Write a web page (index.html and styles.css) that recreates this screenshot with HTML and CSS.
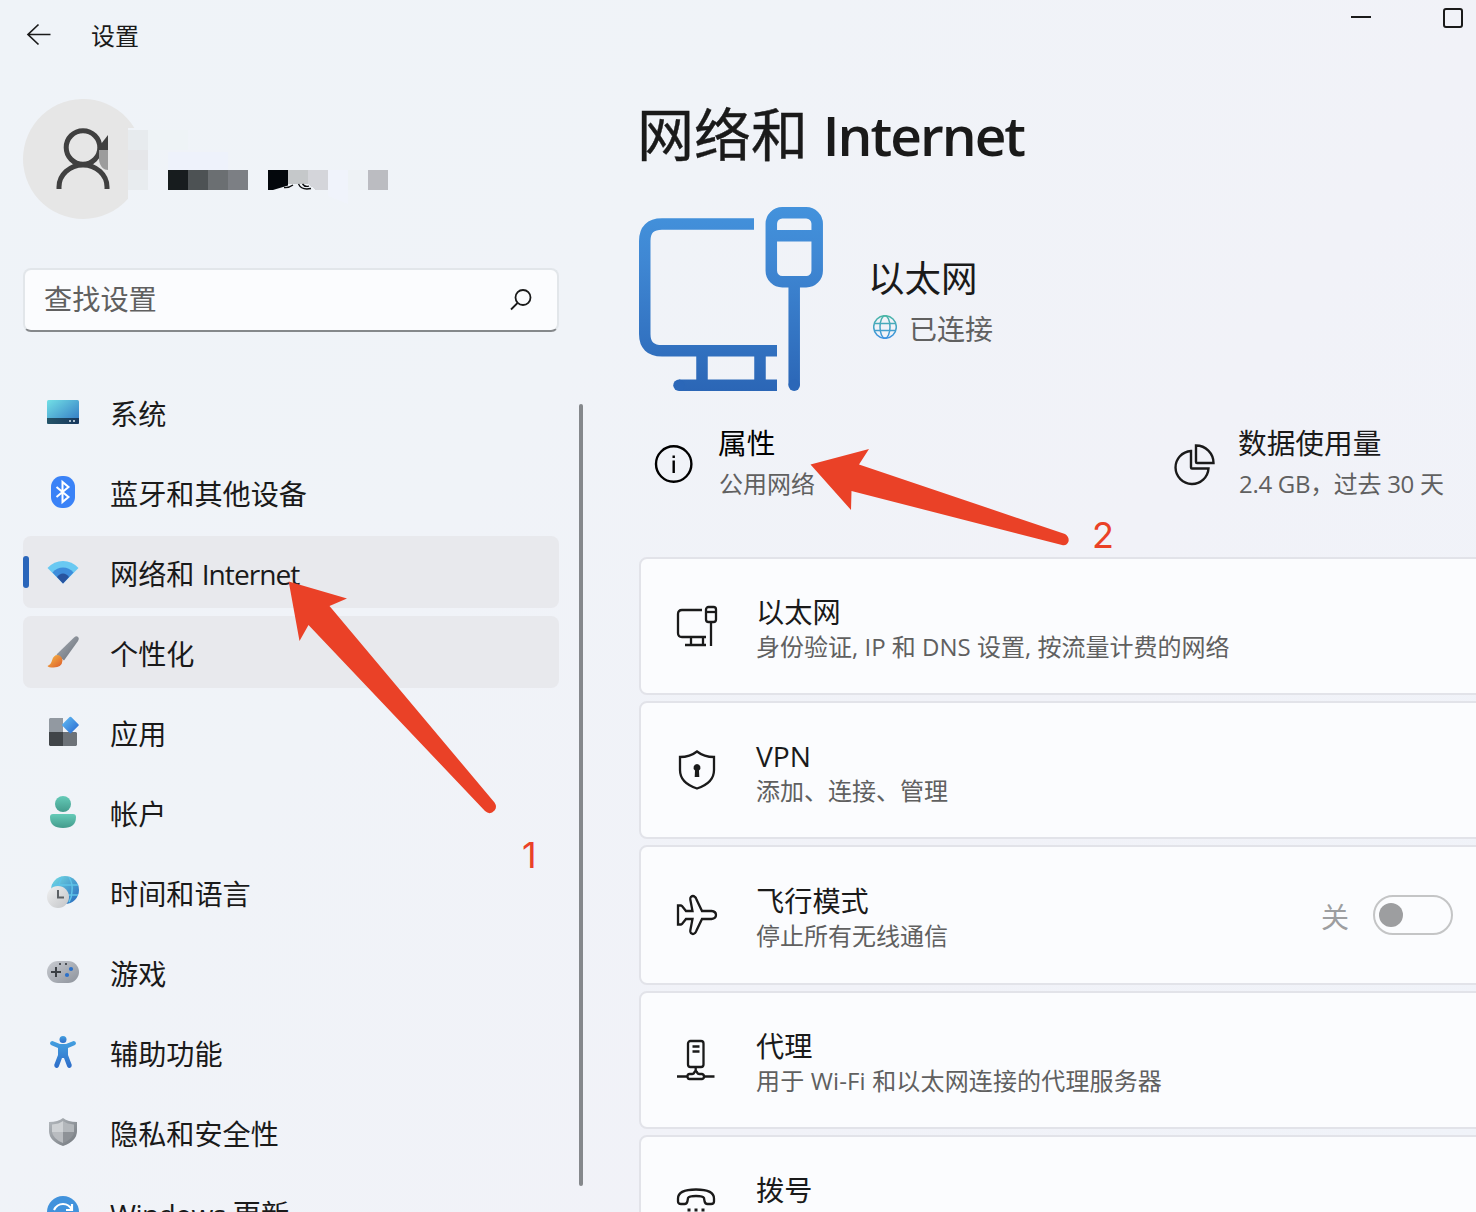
FILE: index.html
```html
<!DOCTYPE html>
<html lang="zh-CN">
<head>
<meta charset="utf-8">
<title>设置</title>
<link rel="stylesheet" href="styles.css">
</head>
<body>
<div class="window">
  <header class="titlebar">
    <svg class="back" width="26" height="24" viewBox="0 0 26 24"><path d="M24.500 11.500H2M12.500 1.500L2 11.500l10.500 10" /></svg>
    <span class="app-title">设置</span>
    <div class="controls">
      <svg width="20" height="20" viewBox="0 0 20 20"><path d="M0 9h20"/></svg>
      <svg width="20" height="20" viewBox="0 0 20 20"><rect x="1" y="1" width="18" height="18" rx="2"/></svg>
    </div>
  </header>
  <div class="body">
    <aside class="sidebar">
      <svg class="profile" width="368" height="120" viewBox="23 99 368 120">
        <path fill="#e6e6e6" d="M128 198.700A60 60 0 1 1 134.400 128H128Z"/>
        <g fill="none" stroke="#404040" stroke-width="5"><circle cx="83" cy="147.500" r="16.800"/><path d="M59 189v-2a24 22 0 0 1 48 0v2"/></g>
        <path fill="#404040" d="M101 144l7-9v15h-7z"/><path fill="#9c9c9c" d="M99 150h9v20c-4 0-8-3-9-10z"/>
        <g shape-rendering="crispEdges">
          <path fill="#e7ebee" d="M128 130h20v20h-20z"/><path fill="#e5e6e9" d="M128 150h20v20h-20z"/><path fill="#e8ecef" d="M128 170h20v20h-20z"/>
          <path fill="#eef3f6" d="M148 130h40v20h-40z"/><path fill="#eef2fb" d="M168 152h60v18h-60z"/>
          <path fill="#171c1e" d="M168 170h20v20h-20z"/><path fill="#4d5254" d="M188 170h20v20h-20z"/><path fill="#6b6f72" d="M208 170h20v20h-20z"/><path fill="#7c7f84" d="M228 170h20v20h-20z"/>
          <path fill="#c5c8ca" d="M288 170h20v14h-20z"/><path fill="#d4d5da" d="M308 170h20v20h-12l-8-6z"/><path fill="#f0f3fb" d="M328 170h20v34l-20-8z"/><path fill="#eef2f5" d="M348 170h20v20h-20z"/><path fill="#bbbcc1" d="M368 170h20v20h-20z"/>
        </g>
        <path fill="#03070c" d="M268 170h20v15.500l-15 4.500h-5z"/>
        <path fill="none" stroke="#0a0c0e" stroke-width="1.300" d="M284 187.500q5 .5 9-2.500M298.500 184q3 6.500 12.500 4.500M302.500 184q2.500 3.500 6.500 2"/>
      </svg>
      <div class="search">
        <span>查找设置</span>
        <svg width="24" height="24" viewBox="0 0 24 24"><circle cx="14" cy="9.500" r="7.500"/><path d="M8.500 15L2 21.500"/></svg>
      </div>
      <nav class="nav">
        <a class="item"><svg viewBox="0 0 32 32"><defs><linearGradient id="sys" x1="0" y1="0" x2="1" y2="1"><stop stop-color="#72e0e6"/><stop offset="1" stop-color="#2f73c2"/></linearGradient><linearGradient id="sysb"><stop stop-color="#255468"/><stop offset="1" stop-color="#17375c"/></linearGradient></defs><rect y="4" width="32" height="24" rx="1.500" fill="url(#sys)"/><path d="M0 22h32v4.500q0 1.500-1.500 1.500h-29Q0 28 0 26.500z" fill="url(#sysb)"/><path d="M22 24h2v2h-2zM26 24h2v2h-2z" fill="#a9bccb"/></svg><span>系统</span></a>
        <a class="item"><svg viewBox="0 0 32 32"><rect x="4" width="24" height="32" rx="11" fill="#3a82f7"/><path d="M9.500 11l12 10-6 5V6l6 5-12 10" fill="none" stroke="#fff" stroke-width="2"/></svg><span>蓝牙和其他设备</span></a>
        <a class="item active"><svg viewBox="0 0 32 32"><path d="M.5 12Q7 5 16 5t15.500 7L16 27.500z" fill="#69c9f2"/><path d="M5.500 16.500Q10 11.500 16 11.500t10.500 5L16 27.500z" fill="#3e8ddb"/><path d="M10 21q2.500-3.500 6-3.500t6 3.500l-6 6.500z" fill="#28549f"/></svg><span>网络和 <span class="latin">Internet</span></span></a>
        <a class="item hover"><svg viewBox="0 0 32 32"><defs><linearGradient id="br" x1="0" y1="0" x2="1" y2="1"><stop stop-color="#aab0b8"/><stop offset="1" stop-color="#666c75"/></linearGradient><linearGradient id="bo" x1="0" y1="0" x2="1" y2="1"><stop stop-color="#f8bd48"/><stop offset="1" stop-color="#db5a2a"/></linearGradient></defs><path d="M9.500 18.500L27 1.500q2.500-2 4-.5t0 4L17 24.500z" fill="url(#br)"/><path d="M.5 30q3.500-1.500 4.500-5.500Q6.500 19 10.500 19q4.500.5 5 5.500-.5 7-9 7-5 0-6-1.500z" fill="url(#bo)"/></svg><span>个性化</span></a>
        <a class="item"><svg viewBox="0 0 32 32"><defs><linearGradient id="ap" x1="0" y1="0" x2="1" y2="1"><stop stop-color="#62bff5"/><stop offset="1" stop-color="#2866cf"/></linearGradient></defs><path d="M3 2h13v14H2V3z" fill="#9299a1"/><path d="M2 16h14v14H3l-1-1z" fill="#414549"/><path d="M16 16h13l1 1v12l-1 1H16z" fill="#6d7278"/><path d="M22.600 1.100q.8-.8 1.600 0l7.200 7.100q.8.800 0 1.600l-7.200 7.300q-.8.800-1.600 0l-7.200-7.300q-.8-.8 0-1.600z" fill="url(#ap)"/></svg><span>应用</span></a>
        <a class="item"><svg viewBox="0 0 32 32"><defs><linearGradient id="ac" x1="0" y1="0" x2="0" y2="1"><stop stop-color="#65cbb8"/><stop offset="1" stop-color="#439b8c"/></linearGradient></defs><circle cx="16" cy="8" r="8" fill="url(#ac)"/><path d="M6 18h20q3 0 3 3 0 11-13 11T3 21q0-3 3-3z" fill="url(#ac)"/></svg><span>帐户</span></a>
        <a class="item"><svg viewBox="0 0 32 32"><defs><linearGradient id="tm" x1="0" y1="0" x2="1" y2="1"><stop offset=".1" stop-color="#6ed3e0"/><stop offset="1" stop-color="#2466bd"/></linearGradient><linearGradient id="ck" x1="0" y1="0" x2="1" y2="1"><stop stop-color="#f1f1f2"/><stop offset="1" stop-color="#c2c4c7"/></linearGradient></defs><circle cx="18" cy="14" r="14" fill="url(#tm)"/><path d="M5 9h26M8 19h23M15 1q-3 5-3 9M22 1q4 7 3 14 0 6-3 11" fill="none" stroke="#5fc3e8" stroke-width="1.500"/><circle cx="11" cy="21" r="11" fill="url(#ck)"/><path d="M11 14v7.500h6" fill="none" stroke="#5c6064" stroke-width="2"/></svg><span>时间和语言</span></a>
        <a class="item"><svg viewBox="0 0 32 32"><defs><linearGradient id="gm" x1="0" y1="0" x2="1" y2="1"><stop stop-color="#c9ccd2"/><stop offset="1" stop-color="#8d929b"/></linearGradient></defs><rect y="5" width="32" height="22" rx="11" fill="url(#gm)"/><path d="M4 16h10M9 11v10" stroke="#3b3f44" stroke-width="2"/><path d="M12 7h2v2h-2zM18 7h2v2h-2z" fill="#4a4e54"/><circle cx="24" cy="13" r="2.100" fill="#2b70c9"/><circle cx="20" cy="19" r="2.100" fill="#2b70c9"/></svg><span>游戏</span></a>
        <a class="item"><svg viewBox="0 0 32 32"><defs><linearGradient id="ax" x1="0" y1="0" x2="0" y2="1"><stop stop-color="#44a0e0"/><stop offset="1" stop-color="#2d6cc9"/></linearGradient></defs><circle cx="16" cy="3.500" r="3.500" fill="url(#ax)"/><path d="M5.500 5L13 8h6l7.500-3q2 0 2.500 2 .2 1.500-1.500 2.200L21 12v7l3.800 10q0 2.500-2 3-2 0-2.600-1.600L17 22h-2l-3.200 8.400Q11.200 32 9.200 32q-2-.5-2-3L11 19v-7L4.500 9.200Q2.800 8.500 3 7q.5-2 2.500-2z" fill="url(#ax)"/></svg><span>辅助功能</span></a>
        <a class="item"><svg viewBox="0 0 32 32"><defs><linearGradient id="sh" x1="0" y1="0" x2="1" y2="1"><stop stop-color="#b5babf"/><stop offset="1" stop-color="#72777d"/></linearGradient></defs><path d="M16 2q5 4 14 4v9q0 10-14 15Q2 25 2 15V6q9 0 14-4z" fill="url(#sh)"/><path d="M16 5v11H5V8.500Q12 8 16 5z" fill="#ced1d4"/><path d="M16 5v11h11V8.500Q20 8 16 5z" fill="#b3b7bb"/><path d="M5 16h11v11Q6 23 5 16z" fill="#b9bcc0"/><path d="M27 16H16v11q10-4 11-11z" fill="#8e9297"/></svg><span>隐私和安全性</span></a>
        <a class="item"><svg viewBox="0 0 32 32"><circle cx="16" cy="16" r="16" fill="#4192dc"/><path d="M7 14q3-6 9-6t9 6M25 8v6h-6M25 18q-3 6-9 6t-9-6" fill="none" stroke="#fff" stroke-width="2.200"/></svg><span><span class="latin">Windows</span> 更新</span></a>
      </nav>
    </aside>
    <div class="scrollbar"></div>
    <main class="content">
      <h1>网络和 <span class="latin">Internet</span></h1>
      <section class="hero">
        <svg width="184" height="184" viewBox="0 0 184 184">
          <defs><linearGradient id="eth" gradientUnits="userSpaceOnUse" x1="0" y1="0" x2="0" y2="184"><stop stop-color="#4392dc"/><stop offset=".3" stop-color="#3f87d3"/><stop offset="1" stop-color="#2b66b6"/></linearGradient></defs>
          <g fill="none" stroke="url(#eth)" stroke-width="11.500"><path d="M115 17H23Q5.750 17 5.750 34v93Q5.750 143.700 23 143.700h115M63 144v34M121 144v34"/><path d="M138 178.200H40" /><rect x="132.300" y="5.750" width="45.900" height="69" rx="11"/><path d="M133 28.800h45M155.200 75v103"/></g>
          <circle cx="40" cy="178.200" r="5.750" fill="#2b67b8"/><circle cx="155.200" cy="178.200" r="5.750" fill="#2b67b8"/>
        </svg>
        <div class="hero-text">
          <h2>以太网</h2>
          <p class="status"><svg width="24" height="24" viewBox="0 0 24 24"><defs><linearGradient id="gl" gradientUnits="userSpaceOnUse" x1="0" y1="0" x2="0" y2="24"><stop stop-color="#4cb8a5"/><stop offset="1" stop-color="#3d90e3"/></linearGradient></defs><g fill="none" stroke="url(#gl)" stroke-width="1.500"><circle cx="12" cy="12" r="11.300"/><ellipse cx="12" cy="12" rx="5" ry="11.300"/><path d="M1.500 8.500h21M1.500 15.500h21"/></g></svg><span>已连接</span></p>
        </div>
      </section>
      <section class="facts">
        <div class="fact">
          <svg width="40" height="40" viewBox="0 0 40 40"><circle cx="19.700" cy="20" r="17.700"/><path d="M19.700 16.500v12.500M19.700 11.500v2.500"/></svg>
          <div class="black"><h3>属性</h3><p>公用网络</p></div>
        </div>
        <div class="fact">
          <svg width="40" height="40" viewBox="0 0 40 40"><path d="M17 7A16.500 16.500 0 1 0 34.500 24.500H18Q17 24.500 17 23.500zM22 1.500A17.500 17.500 0 0 1 39.500 19H23Q22 19 22 18z"/></svg>
          <div><h3>数据使用量</h3><p class="usage">2.4 GB，过去 30 天</p></div>
        </div>
      </section>
      <section class="cards">
        <div class="card"><svg viewBox="0 0 40 40"><path d="M25 4H5Q1 4 1 8v19q0 4 4 4h24M14 31v8M26 31v8M8 39h21M34 16v24"/><rect x="29" y="1" width="10" height="15" rx="2.500"/><path d="M29 6h10"/></svg><div><h4>以太网</h4><p>身份验证, IP 和 DNS 设置, 按流量计费的网络</p></div></div>
        <div class="card"><svg viewBox="0 0 40 40"><path d="M20 1.500Q27 7 37 7v13q0 13-17 18.500Q3 33 3 20V7q10 0 17-5.500z"/><path d="M20 14a3.600 3.600 0 0 1 2 6.500l.3 6.500h-4.600l.3-6.500a3.600 3.600 0 0 1 2-6.500z" class="solid"/></svg><div><h4>VPN</h4><p>添加、连接、管理</p></div></div>
        <div class="card tall"><svg viewBox="0 0 40 40"><path d="M14 1.800q2-1.600 4 .2 1 .8 1.500 2.500L25 16h9.500q4.500.5 4.500 4t-4.500 4H25l-5.500 11.500q-.5 1.700-1.500 2.500-2 1.800-4 .2-1-1-.7-2.700L15.500 24H9l-4 5q-.5.500-1.300.500H1V10.500h2.700q.8 0 1.300.5l4 5h6.500L13.300 4.500q-.3-1.700.7-2.700z"/></svg><div><h4>飞行模式</h4><p>停止所有无线通信</p></div><div class="switch"><span>关</span><i class="track"><i class="knob"></i></i></div></div>
        <div class="card"><svg viewBox="0 0 40 40"><rect x="11" y="1" width="15.500" height="26" rx="2.500"/><path d="M15.500 6.500h7M15.500 11.500h7M18.700 27v5M0 36.500h10M27.500 36.500h10"/><path d="M12.500 34h2.500q2 0 2.500-2l1.200-1 1.200 1q.5 2 2.600 2H25q2 .3 2 2.500T25 39H12.500q-2 0-2-2.500t2-2.500z"/></svg><div><h4>代理</h4><p class="wide">用于 Wi-Fi 和以太网连接的代理服务器</p></div></div>
        <div class="card last"><svg viewBox="0 0 40 40"><path d="M1 14.500Q1 5.500 19 5.500t18 9v3Q37 20 34 20h-3.500q-2.500 0-3-3l-.5-3q-1-2-8-2t-8 2l-.5 3q-.5 3-3 3H4q-3 0-3-2.500z"/><path d="M12 24.500v3M19 24.500v3M26 24.500v3" class="dots"/></svg><div><h4>拨号</h4></div></div>
      </section>
    </main>
  </div>
  <svg class="annotations" width="1476" height="1212" viewBox="0 0 1476 1212">
    <path d="M288.700 581.500L347 598.500 329.500 606 494.500 802.500Q497.500 807 494.500 810.500 490 815.500 485 811L308.500 625 299.500 641z"/>
    <path d="M810.500 464.500L869 449 859 464.500 1065 534Q1069.500 537 1068.500 541.500 1067 546 1062 545L851.500 491 851 510z"/>
    <text x="522" y="868">1</text>
    <text x="1092" y="548">2</text>
  </svg>
</div>
</body>
</html>
```

FILE: styles.css
```css
* { box-sizing: border-box; margin: 0; padding: 0; }

body {
  font-family: "Open Sans", "Noto Sans CJK SC", sans-serif;
  color: #1a1a1a;
  overflow: hidden;
}

h1, h2, h3, h4 { font-weight: 400; }

.window {
  position: relative;
  width: 1476px;
  height: 1212px;
  overflow: hidden;
  background: linear-gradient(125deg, #eff3f8 0%, #f0f3f8 35%, #f1f2f8 65%, #f0f3f9 100%);
}

.titlebar {
  display: flex;
  align-items: center;
  height: 69px;
  padding-left: 26px;
}
.titlebar svg { fill: none; stroke: #1a1a1a; stroke-width: 2; }
.titlebar .back { stroke-width: 1.7; }
.app-title { margin-left: 39px; padding-top: 2px; font-size: 24px; line-height: 32px; }
.controls {
  display: flex;
  gap: 72px;
  margin-left: auto;
  align-self: flex-start;
  padding: 8px 13px 0 0;
}

.body { display: flex; padding-left: 23px; }
.sidebar { width: 536px; padding-top: 30px; flex: none; }
.profile { display: block; }
.search {
  display: flex;
  align-items: center;
  justify-content: space-between;
  height: 64px;
  margin-top: 49px;
  padding: 0 24px 0 19px;
  border: 2px solid #e2e6ea;
  border-bottom-color: #85888b;
  border-radius: 8px;
  background: #fbfcfe;
  color: #606060;
  font-size: 28.2px;
  line-height: 38px;
}
.search span { margin-top: -2px; }
.search svg { fill: none; stroke: #1a1a1a; stroke-width: 1.8; }

.nav { display: grid; gap: 8px; margin-top: 44px; }
.item {
  position: relative;
  display: flex;
  align-items: center;
  gap: 31px;
  height: 72px;
  padding-left: 24px;
  border-radius: 8px;
  font-size: 28.15px;
  line-height: 40px;
  white-space: nowrap;
}
.item svg { width: 32px; height: 32px; flex: none; }
.item > span { padding-top: 4px; }
.item .latin { letter-spacing: -0.6px; }
.item.active .latin { letter-spacing: -1px; }
.item.active, .item.hover { background: #e8e9ed; }
.item.active::before {
  content: "";
  position: absolute;
  left: 0;
  top: 20px;
  width: 6px;
  height: 32px;
  border-radius: 3px;
  background: #2a66bb;
}

.scrollbar {
  width: 4px;
  height: 782px;
  margin: 335px 0 0 20px;
  border-radius: 2px;
  background: #85888c;
  flex: none;
}

.content { width: 860px; margin-left: 56px; flex: none; padding-top: 29px; }
.content h1 { height: 72px; margin-left: -2px; font-size: 57px; line-height: 72px; white-space: nowrap; -webkit-text-stroke: 0.4px #1a1a1a; }
.content h1 .latin { font-size: 55px; font-weight: 600; letter-spacing: -2px; -webkit-text-stroke: 0; }

.hero { display: flex; margin-top: 37px; height: 184px; }
.hero-text { padding: 47px 0 0 46px; }
.hero h2 { font-size: 36.5px; line-height: 48px; margin-left: -1px; }
.status {
  display: flex;
  align-items: center;
  gap: 12px;
  padding-left: 4px;
  margin-top: 5px;
  font-size: 28px;
  line-height: 44px;
  color: #606060;
}
.status svg { margin-top: -5px; }

.facts { display: grid; grid-template-columns: 520px 340px; margin-top: 29px; height: 137px; }
.fact { display: flex; gap: 24px; padding-left: 15px; }
.fact svg { fill: none; stroke: #1a1a1a; stroke-width: 2.4; margin-top: 24px; flex: none; overflow: visible; }
.fact h3 { font-size: 28.7px; line-height: 46px; white-space: nowrap; }
.fact p { padding-left: 1px; font-size: 24px; line-height: 36px; color: #606060; white-space: nowrap; }
.fact .usage { letter-spacing: -0.3px; }
.fact .black { color: #000; }
.fact:first-child svg { stroke: #000; }

.cards { display: grid; gap: 6px; }
.card {
  display: flex;
  align-items: center;
  gap: 39px;
  height: 138px;
  padding-left: 36px;
  border: 2px solid #e2e3e9;
  border-radius: 8px;
  background: #fbfcfe;
}
.card.tall { height: 140px; }
.card svg { width: 40px; height: 40px; flex: none; fill: none; stroke: #1a1a1a; stroke-width: 2.3; overflow: visible; }
.card .solid { fill: #1a1a1a; stroke: none; }
.card .dots { stroke-width: 3; }
.card > div { padding-top: 5px; }
.card.last > div { padding-bottom: 34px; }
.card h4 { font-size: 28.2px; line-height: 36px; }
.card p { font-size: 24px; line-height: 34px; color: #606060; white-space: nowrap; }
.card .wide { letter-spacing: 0.15px; }

.card .switch {
  display: flex;
  align-items: center;
  gap: 24px;
  margin-left: auto;
  padding: 0 44px 0 0;
  font-size: 28px;
  color: #9d9ea0;
}
.switch span { padding-top: 1px; }
.track {
  display: flex;
  align-items: center;
  width: 80px;
  height: 40px;
  padding-left: 4px;
  border: 2px solid #c4c5c6;
  border-radius: 20px;
}
.knob { width: 24px; height: 24px; border-radius: 50%; background: #9d9ea0; }

/* Callout arrows lie over the page */
.annotations { position: absolute; left: 0; top: 0; fill: #ea4127; pointer-events: none; }
.annotations text { font-family: Inter, sans-serif; font-size: 36px; }
```
